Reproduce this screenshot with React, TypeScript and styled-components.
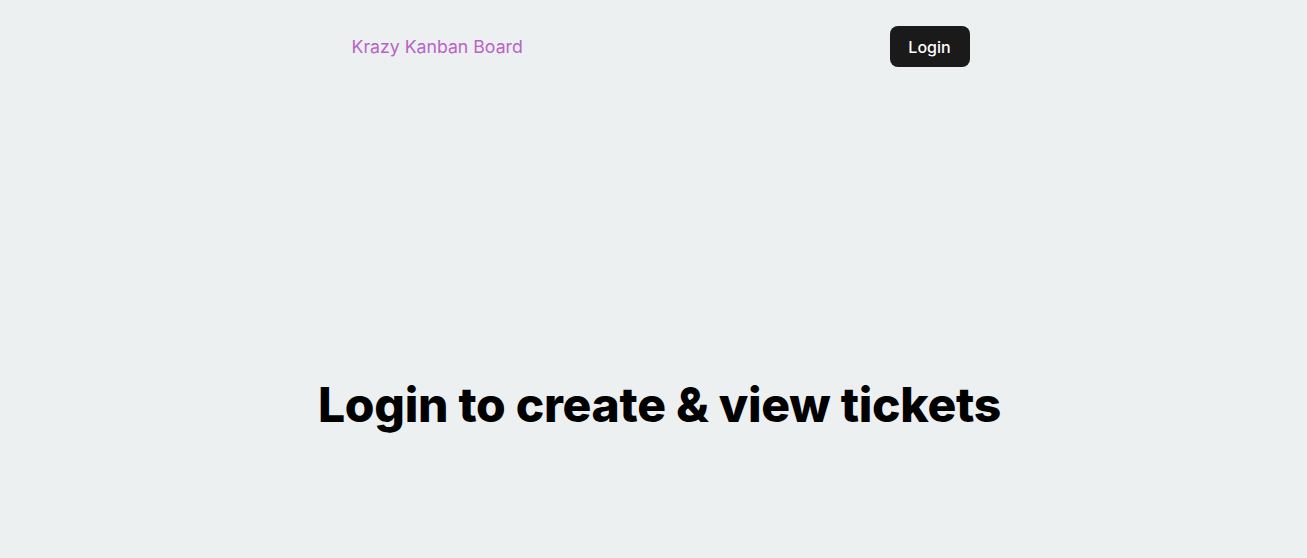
import React from "react";
import styled, { createGlobalStyle } from "styled-components";

const Global = createGlobalStyle`
  html, body { margin: 0; padding: 0; background: #ecf0f1; }
  body { font-family: Inter, "Noto Sans", sans-serif; color: #000; }
`;

const Page = styled.div`
  min-height: 558px;
  display: flex;
  flex-direction: column;
  align-items: center;
`;

const Nav = styled.nav`
  width: 618px;
  margin-left: 14px;
  display: flex;
  justify-content: space-between;
  align-items: center;
  padding-top: 26px;
`;

const Brand = styled.a`
  color: #b963c6;
  font-size: 17.7px;
  font-weight: 400;
  text-decoration: none;
`;

const LoginButton = styled.button`
  background: #1a1a1a;
  color: #fff;
  border: none;
  border-radius: 8px;
  height: 41px;
  width: 80px;
  padding: 0;
  font-family: inherit;
  font-size: 16px;
  font-weight: 500;
`;

const Main = styled.main`
  flex: 1;
  display: flex;
  justify-content: center;
  padding-top: 308px;
`;

const Heading = styled.h1`
  margin: 0 0 0 12px;
  font-size: 48px;
  font-weight: 800;
  letter-spacing: -0.27px;
`;

export default function App() {
  return (
    <>
      <Global />
      <Page>
        <Nav>
          <Brand href="#">Krazy Kanban Board</Brand>
          <LoginButton>Login</LoginButton>
        </Nav>
        <Main>
          <Heading>Login to create &amp; view tickets</Heading>
        </Main>
      </Page>
    </>
  );
}
